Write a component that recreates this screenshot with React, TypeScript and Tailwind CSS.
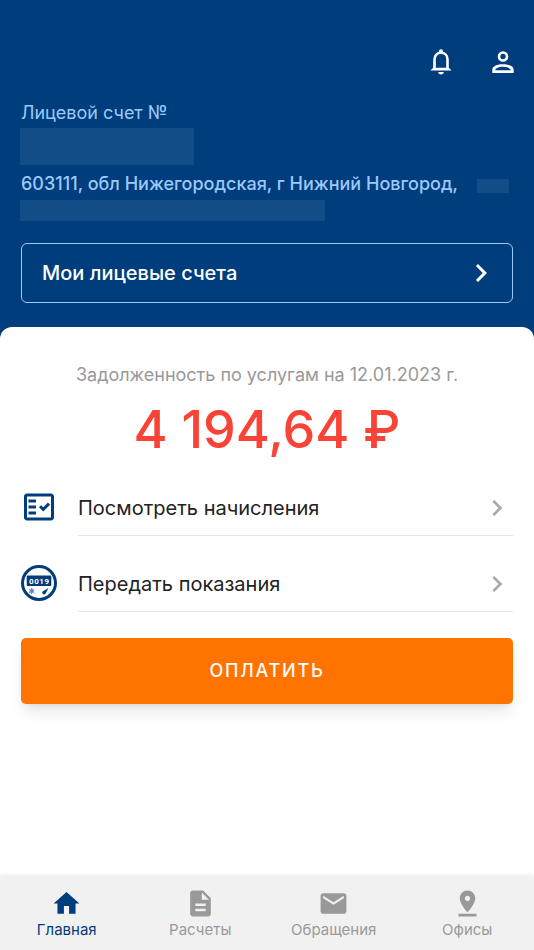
import { MdChevronRight, MdDescription, MdEmail, MdHome, MdOutlineFactCheck, MdPinDrop } from 'react-icons/md';

const menu = [
  { label: 'Посмотреть начисления', icon: <MdOutlineFactCheck size={36} /> },
  { label: 'Передать показания', icon: <MeterIcon /> },
];

const tabs = [
  { label: 'Главная', Icon: MdHome, active: true },
  { label: 'Расчеты', Icon: MdDescription, active: false },
  { label: 'Обращения', Icon: MdEmail, active: false },
  { label: 'Офисы', Icon: MdPinDrop, active: false },
];

function BellIcon() {
  return (
    <svg width="24" height="28" viewBox="0 0 24 28" fill="none" aria-hidden="true">
      <path d="M12 1.200c1.200 0 2 .9 2 2v1.600h-4V3.200c0-1.100.8-2 2-2Z" fill="#fff" />
      <path d="M5.500 21.500V11.500C5.500 7.600 8.300 4.800 12 4.800s6.500 2.800 6.500 6.700v10" stroke="#fff" strokeWidth="2.600" />
      <path d="M1.400 22.500 4.200 19.800h15.600l2.800 2.700H1.400Z" fill="#fff" />
      <path d="M9.200 23.900h5.600c0 1.500-1.200 2.500-2.800 2.500s-2.800-1-2.800-2.500Z" fill="#fff" />
    </svg>
  );
}

function PersonIcon() {
  return (
    <svg width="24" height="24" viewBox="0 0 24 24" fill="none" aria-hidden="true">
      <circle cx="12" cy="6.500" r="4" stroke="#fff" strokeWidth="2.600" />
      <path
        fill="#fff"
        fillRule="evenodd"
        d="M1.300 23v-3.300c0-3.700 5.200-5.500 10.700-5.500s10.700 1.800 10.700 5.500V23H1.300Zm2.800-2.700h15.800c-.6-2-3.900-3.500-7.900-3.500s-7.300 1.500-7.900 3.500Z"
      />
    </svg>
  );
}

function MeterIcon() {
  return (
    <svg width="36" height="36" viewBox="0 0 36 36" aria-hidden="true">
      <circle cx="18" cy="18" r="16.500" fill="#fff" stroke="currentColor" strokeWidth="3" />
      <rect x="5.700" y="10.500" width="24.600" height="10.500" rx="1" fill="currentColor" />
      <text
        x="18.300"
        y="18.700"
        textAnchor="middle"
        fontSize="8"
        fontWeight="700"
        fontFamily="Roboto, sans-serif"
        letterSpacing="0.500"
        fill="#fff"
      >
        0019
      </text>
      <g stroke="#5c8abb" strokeWidth="1">
        <path d="M10.700 23v6M8.100 24.500l5.200 3M13.300 24.500l-5.200 3" />
        <circle cx="10.700" cy="26" r="1.600" fill="none" />
      </g>
      <path d="M27.500 23 25 27.800a1.900 1.900 0 1 1-2.200-2.100l4.700-2.700Z" fill="currentColor" />
    </svg>
  );
}

export default function App() {
  return (
    <div className="flex min-h-screen flex-col bg-[#003d7c] font-['Inter',sans-serif]">
      <header className="px-5 pt-11 pb-6">
        <div className="-mr-px flex h-9 items-center justify-end gap-[38px]">
          <button type="button" aria-label="Уведомления">
            <BellIcon />
          </button>
          <button type="button" aria-label="Профиль">
            <PersonIcon />
          </button>
        </div>

        <p className="mt-[21px] px-px text-lg leading-6 text-[#9cc9fb]">Лицевой счет №</p>
        <div className="mt-[3px] h-[37px] w-[174px] bg-[#124d88]" />
        <div className="mt-[7px] flex items-center justify-between pr-[5px] pl-px text-lg leading-6 font-medium text-[#9cc9fb]">
          <p>603111, обл Нижегородская, г Нижний Новгород,</p>
          <span className="mt-1 h-[14px] w-8 shrink-0 bg-[#124d88]" />
        </div>
        <div className="mt-1 h-[21px] w-[305px] bg-[#124d88]" />

        <div className="mt-[22px] px-px">
          <button
            type="button"
            className="flex h-[60px] w-full items-center justify-between rounded-md border border-[#9cc9fb] px-5 text-xl font-medium text-white"
          >
            Мои лицевые счета
            <MdChevronRight size={36} className="-mr-[7px]" />
          </button>
        </div>
      </header>

      <main className="flex-1 rounded-t-xl bg-white px-[21px] pt-9">
        <p className="text-center text-lg leading-6 text-[#999]">Задолженность по услугам на 12.01.2023 г.</p>
        <p className="mt-[13px] text-center text-[52px] leading-[60px] font-medium text-[#f94336]">4 194,64 ₽</p>

        {menu.map(({ label, icon }) => (
          <button key={label} type="button" className="flex h-[76px] w-full text-left">
            <span className="flex h-full w-[57px] items-center pt-[18px] text-[#003d7c]">{icon}</span>
            <span className="flex h-full flex-1 items-center justify-between border-b border-[#e6e6e6] pt-5 text-xl text-[#222]">
              {label}
              <MdChevronRight size={32} className="text-[#aaa]" />
            </span>
          </button>
        ))}

        <button
          type="button"
          className="mt-[26px] h-[66px] w-full rounded-[5px] bg-[#ff7300] text-lg font-medium tracking-widest text-white shadow-lg"
        >
          ОПЛАТИТЬ
        </button>
      </main>

      <nav className="grid h-[74px] grid-cols-4 bg-[#f1f1f1] shadow-[0_-1px_4px_rgba(0,0,0,0.08)]">
        {tabs.map(({ label, Icon, active }) => (
          <a
            key={label}
            href="#"
            className={`flex flex-col items-center gap-px pt-3 text-[15px] leading-5 ${active ? 'text-[#003d7c]' : 'text-[#999]'}`}
          >
            <Icon size={31} />
            {label}
          </a>
        ))}
      </nav>
    </div>
  );
}
